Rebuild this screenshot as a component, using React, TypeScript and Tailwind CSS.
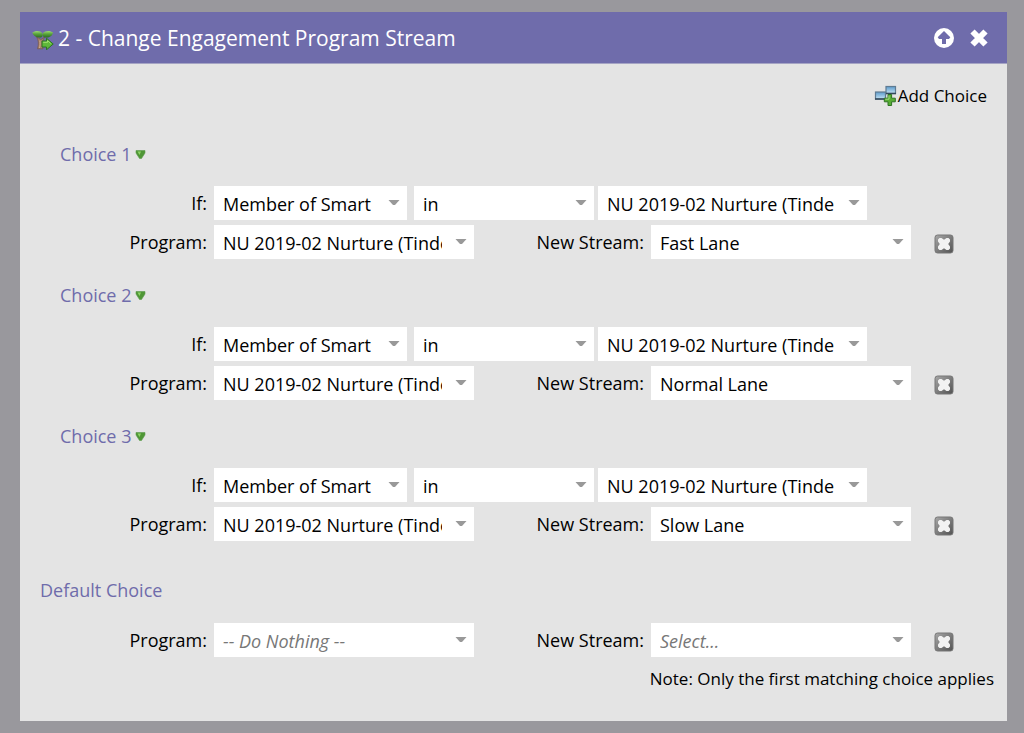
import { useState } from "react";

const SMART_LIST = "NU 2019-02 Nurture (Tinde";

function SproutIcon() {
  return (
    <svg width="22" height="20" viewBox="0 0 22 20" aria-hidden="true">
      <defs>
        <linearGradient id="leaf" x1="0" y1="0" x2="0" y2="1">
          <stop offset="0" stopColor="#a0dc78" />
          <stop offset=".45" stopColor="#5aa53c" />
          <stop offset="1" stopColor="#2b6b22" />
        </linearGradient>
      </defs>
      <path d="M4.500 7C6.500 9.500 7 14 5.500 18.800h5.500c-1-4.300-.5-8.300 1.500-11.800L9 9.500z" fill="#a58068" stroke="#75564c" strokeWidth=".7" />
      <path d="M7.800 10.500c.5 3 .3 5-.3 7.500" fill="none" stroke="#d0ae90" strokeWidth="1" />
      <path d="M.3 2.500C3 .3 8.500.3 10.200 3c1.200 2.500.3 4.500-2.200 4.500C4.500 7.700 1.300 6 .3 2.500z" fill="url(#leaf)" />
      <path d="M11 3C13 .3 18.500.3 21 2.500c-.8 3.800-3.500 5.200-7 5-2.800 0-4-2-3-4.500z" fill="url(#leaf)" />
      <path d="M10 11h4.500V8.200l6.700 5.800-6.700 5.800v-2.800H10z" fill="#5fb93a" stroke="#2c7424" strokeWidth="1" />
      <path d="M11.200 12.300h4.300v-1.800l3.200 3" fill="none" stroke="#a2e072" strokeWidth="1" />
    </svg>
  );
}

function AddChoiceIcon() {
  return (
    <svg width="23" height="22" viewBox="0 0 23 22" aria-hidden="true">
      <defs>
        <linearGradient id="box" x1="0" y1="0" x2="0" y2="1">
          <stop offset="0" stopColor="#5d9bcb" />
          <stop offset="1" stopColor="#c4e3f5" />
        </linearGradient>
      </defs>
      <rect x="12" y="1.500" width="9.500" height="7" fill="url(#box)" stroke="#5f7b92" strokeWidth="1.200" />
      <rect x="1.500" y="7" width="10" height="7" fill="url(#box)" stroke="#5f7b92" strokeWidth="1.200" />
      <path d="M1 14h11M12 8.500h10" stroke="#33485a" strokeWidth="1.400" />
      <path d="M14 9.500h3.600v3.700h3.700v3.600h-3.700v3.700H14v-3.700h-3.700v-3.600H14z" fill="#57ac35" stroke="#2f7424" strokeWidth="1" />
      <path d="M15 10.500v3.700h-3.700" fill="none" stroke="#a5dc80" strokeWidth="1" />
    </svg>
  );
}

function RemoveIcon() {
  return (
    <svg width="20" height="20" viewBox="0 0 20 20" aria-hidden="true">
      <defs>
        <linearGradient id="remove" x1="0" y1="0" x2="1" y2="1">
          <stop offset="0" stopColor="#a8a8a8" />
          <stop offset="1" stopColor="#515151" />
        </linearGradient>
      </defs>
      <rect x="1" y="1" width="18" height="18" rx="2.500" fill="url(#remove)" stroke="#777" strokeWidth="1" />
      <path d="M5.500 4h2L10 5.800 12.500 4h2L16 5.500v2L14.200 10l1.800 2.500v2L14.500 16h-2L10 14.200 7.500 16h-2L4 14.500v-2L5.800 10 4 7.500v-2z" fill="#f2f2f2" />
    </svg>
  );
}

function Picker({ id, label, value, className, placeholder = false }: {
  id: string;
  label?: string;
  value: string;
  className: string;
  placeholder?: boolean;
}) {
  return (
    <div className={`grid min-w-0 basis-0 items-center ${className}`}>
      <select
        id={id}
        aria-label={label}
        className={`col-start-1 row-start-1 h-[34px] w-full min-w-0 appearance-none overflow-hidden bg-white pt-0.5 pr-8 pl-[9px] ${placeholder ? "text-[#777] italic" : "text-black"}`}
      >
        <option>{value}</option>
      </select>
      <svg className="pointer-events-none col-start-1 row-start-1 mr-[7px] mb-0.5 justify-self-end" width="12" height="7" viewBox="0 0 12 7" aria-hidden="true">
        <path d="M.5 1h11L7 6H5z" fill="#999" />
      </svg>
    </div>
  );
}

function StreamRow({ id, program, stream, placeholder = false }: {
  id: string;
  program: string;
  stream: string;
  placeholder?: boolean;
}) {
  return (
    <div className="flex items-center pr-[53px]">
      <label htmlFor={`${id}-program`} className="w-[194px] shrink-0 pr-[7px] text-right">Program:</label>
      <Picker id={`${id}-program`} value={program} className="grow" placeholder={placeholder} />
      <label htmlFor={`${id}-stream`} className="w-[177px] shrink-0 pr-[7px] text-right">New Stream:</label>
      <Picker id={`${id}-stream`} value={stream} className="grow" placeholder={placeholder} />
      <button type="button" aria-label="Remove" className="mt-1 ml-[23px]">
        <RemoveIcon />
      </button>
    </div>
  );
}

function Choice({ number, stream }: { number: number; stream: string }) {
  const [open, setOpen] = useState(true);
  const id = `choice-${number}`;
  return (
    <section className="mb-[22px]">
      <h2 className="pl-10">
        <button type="button" aria-expanded={open} onClick={() => setOpen(!open)} className="flex h-7 items-center gap-1 text-[#6f6cab]">
          Choice {number}
          <svg width="11" height="9" viewBox="0 0 11 9" aria-hidden="true">
            <path d="M1 .5h9v2.500L6.500 8.500h-2L1 3z" fill="#4f9636" stroke="#5b9a4c" strokeWidth=".6" />
            <path d="M2.500 1.500h3.500L4.500 5z" fill="#8ed566" />
          </svg>
        </button>
      </h2>
      {open && (
        <div className="mt-[18px] flex flex-col gap-[5px]">
          <div className="flex items-center pr-[140px]">
            <label htmlFor={`${id}-filter`} className="w-[194px] shrink-0 pr-[7px] text-right">If:</label>
            <Picker id={`${id}-filter`} value="Member of Smart" className="mr-[7px] grow-[193]" />
            <Picker id={`${id}-operator`} label="Operator" value="in" className="mr-1 grow-[180]" />
            <Picker id={`${id}-list`} label="Smart list" value={SMART_LIST} className="grow-[269]" />
          </div>
          <StreamRow id={id} program={SMART_LIST} stream={stream} />
        </div>
      )}
    </section>
  );
}

export default function App() {
  return (
    <main className="min-h-screen bg-[#99989d] pt-3 pr-[17px] pb-3 pl-5 font-['Open_Sans',sans-serif] text-[18px] leading-6 text-black">
      <div className="bg-[#e4e4e4] pb-[30px]">
        <header className="flex h-[52px] items-center border-b border-[#a5a4c4] bg-[#6f6cab] pr-[18px] pl-3 text-white">
          <span className="mt-1"><SproutIcon /></span>
          <h1 className="ml-1 grow text-[21px]">2 - Change Engagement Program Stream</h1>
          <button type="button" aria-label="Move up">
            <svg width="20" height="20" viewBox="0 0 20 20" aria-hidden="true">
              <circle cx="10" cy="10" r="10" fill="#fff" />
              <path d="M10 3l6.300 6.300-1.300 1.700h-3V16H8v-5H5L3.700 9.300z" fill="#6f6cab" />
            </svg>
          </button>
          <button type="button" aria-label="Close" className="ml-[15px]">
            <svg width="20" height="20" viewBox="0 0 20 20" aria-hidden="true">
              <path d="M3.500 3.500l13 13M16.500 3.500l-13 13" stroke="#fff" strokeWidth="6" />
            </svg>
          </button>
        </header>
        <div className="flex h-16 items-center justify-end pr-5">
          <button type="button" className="flex items-center gap-px text-[17px]"><AddChoiceIcon />Add Choice</button>
        </div>
        <div className="pt-3">
          <Choice number={1} stream="Fast Lane" />
          <Choice number={2} stream="Normal Lane" />
          <Choice number={3} stream="Slow Lane" />
        </div>
        <section className="pt-[13px]">
          <h2 className="mb-[19px] flex h-7 items-center pl-5 text-[#6f6cab]">Default Choice</h2>
          <StreamRow id="default" program="-- Do Nothing --" stream="Select..." placeholder />
        </section>
        <p className="mt-[10px] pr-[13px] text-right text-[17px]">Note: Only the first matching choice applies</p>
      </div>
    </main>
  );
}
